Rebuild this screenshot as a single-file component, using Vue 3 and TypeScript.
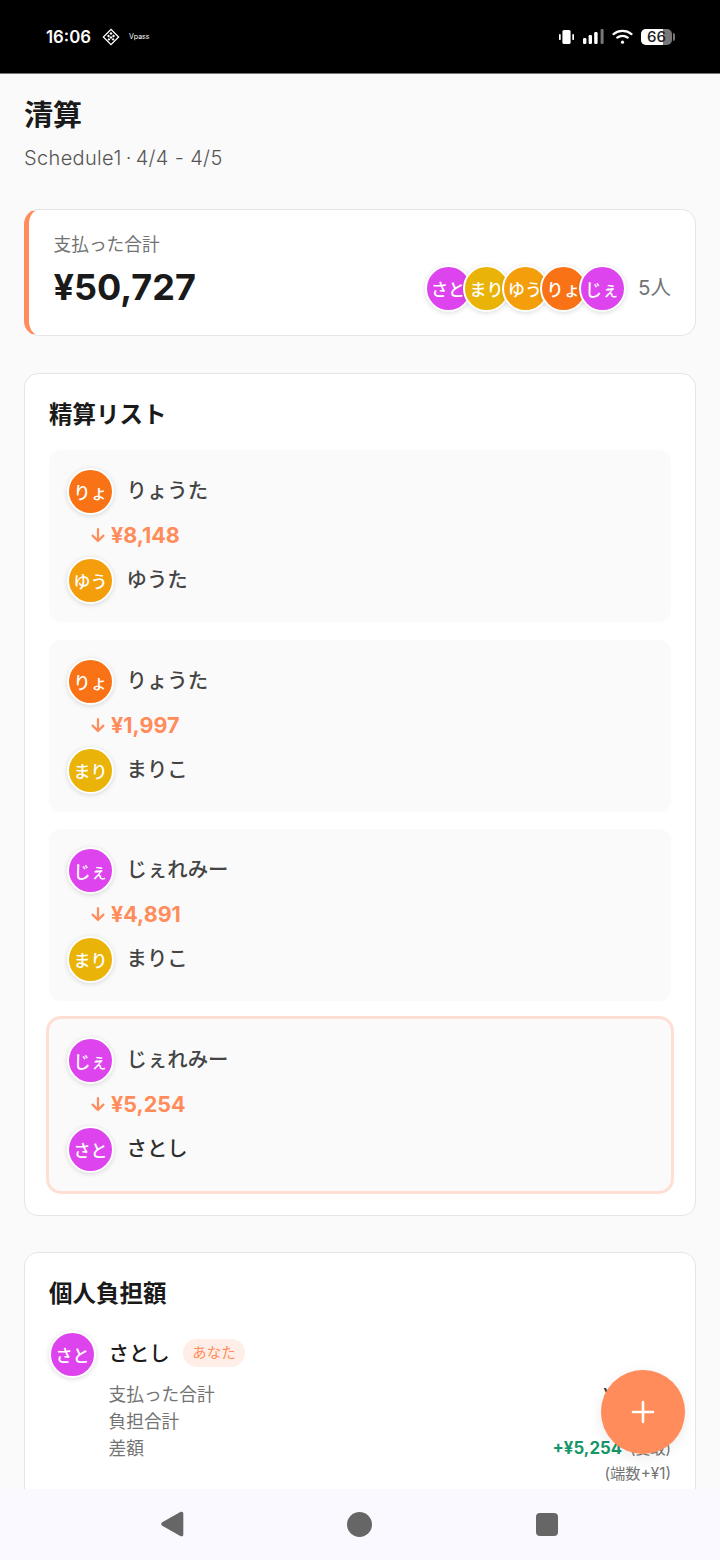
<script setup lang="ts">
interface Person {
  short: string
  name: string
  color: string
}

const sato: Person = { short: 'さと', name: 'さとし', color: '#dd44ee' }
const mari: Person = { short: 'まり', name: 'まりこ', color: '#eab308' }
const yuta: Person = { short: 'ゆう', name: 'ゆうた', color: '#f59e0b' }
const ryo: Person = { short: 'りょ', name: 'りょうた', color: '#f97316' }
const jere: Person = { short: 'じぇ', name: 'じぇれみー', color: '#dd44ee' }

const members = [sato, mari, yuta, ryo, jere]

const settlements = [
  { from: ryo, to: yuta, amount: '¥8,148', mine: false },
  { from: ryo, to: mari, amount: '¥1,997', mine: false },
  { from: jere, to: mari, amount: '¥4,891', mine: false },
  { from: jere, to: sato, amount: '¥5,254', mine: true },
]
</script>

<template>
  <div class="screen">
    <header class="statusbar">
      <div class="status-left">
        <span class="time">16:06</span>
        <svg class="vpass-icon" width="18" height="18" viewBox="0 0 18 18" fill="none">
          <rect x="3.6" y="3.6" width="10.8" height="10.8" transform="rotate(45 9 9)" stroke="#fff" stroke-width="1.3" />
          <g fill="#fff">
            <rect x="7.9" y="4.4" width="2.2" height="2.2" transform="rotate(45 9 5.5)" />
            <rect x="5.4" y="6.9" width="2.2" height="2.2" transform="rotate(45 6.5 8)" />
            <rect x="10.4" y="6.9" width="2.2" height="2.2" transform="rotate(45 11.5 8)" />
            <rect x="7.9" y="8.4" width="2.2" height="2.2" transform="rotate(45 9 9.5)" />
            <rect x="5.9" y="10.4" width="2" height="2" transform="rotate(45 6.9 11.4)" />
            <rect x="10.1" y="10.4" width="2" height="2" transform="rotate(45 11.1 11.4)" />
          </g>
        </svg>
        <span class="vpass">Vpass</span>
      </div>
      <div class="status-right">
        <svg width="15" height="14" viewBox="0 0 15 14" fill="#fff">
          <rect x="3.4" y="0" width="8.2" height="14" rx="1.6" />
          <rect x="0" y="4" width="1.7" height="6" rx="0.85" />
          <rect x="13.3" y="4" width="1.7" height="6" rx="0.85" />
        </svg>
        <svg class="signal" width="21" height="15" viewBox="0 0 21 15" fill="#fff">
          <rect x="0" y="9" width="3.4" height="6" rx="1.2" />
          <rect x="5.6" y="6" width="3.4" height="9" rx="1.2" />
          <rect x="11.2" y="3" width="3.4" height="12" rx="1.2" />
          <rect x="17.6" y="0" width="3" height="15" rx="1" fill="#777" />
        </svg>
        <svg class="wifi" width="21" height="15" viewBox="0 0 22 16" fill="none" stroke="#fff" stroke-width="2.4" stroke-linecap="round">
          <path d="M1.4 5.4C7 .8 15 .8 20.6 5.4" />
          <path d="M5.4 9.2C8.6 6.6 13.4 6.6 16.6 9.2" />
          <circle cx="11" cy="14" r="1.7" fill="#fff" stroke="none" />
        </svg>
        <div class="battery">
          <div class="battery-body">
            <span class="battery-fill"></span>
            <span class="battery-text">66</span>
          </div>
          <span class="battery-cap"></span>
        </div>
      </div>
    </header>

    <main class="content">
      <h1 class="title">清算</h1>
      <p class="subtitle">Schedule1<span class="dot">·</span>4/4 - 4/5</p>

      <section class="total-card">
        <div>
          <div class="total-label">支払った合計</div>
          <div class="total-value">¥50,727</div>
        </div>
        <div class="members">
          <div class="stack">
            <span v-for="m in members" :key="m.name" class="avatar" :style="{ background: m.color }">{{ m.short }}</span>
          </div>
          <span class="count">5人</span>
        </div>
      </section>

      <section class="card list-card">
        <h2 class="card-title">精算リスト</h2>
        <div class="items">
          <div v-for="s in settlements" :key="s.amount" class="item" :class="{ mine: s.mine }">
            <div class="who">
              <span class="avatar" :style="{ background: s.from.color }">{{ s.from.short }}</span>
              <span class="who-name">{{ s.from.name }}</span>
            </div>
            <div class="amount">
              <svg width="16" height="16" viewBox="0 0 16 16" fill="none" stroke="#ff8c5a" stroke-width="2.2" stroke-linecap="round" stroke-linejoin="round">
                <path d="M8 2v12M2.6 8.6 8 14l5.4-5.4" />
              </svg>
              <span>{{ s.amount }}</span>
            </div>
            <div class="who">
              <span class="avatar" :style="{ background: s.to.color }">{{ s.to.short }}</span>
              <span class="who-name" :class="{ strong: s.mine }">{{ s.to.name }}</span>
            </div>
          </div>
        </div>
      </section>

      <section class="card person-card">
        <h2 class="card-title">個人負担額</h2>
        <div class="person">
          <span class="avatar" :style="{ background: sato.color }">さと</span>
          <div class="person-body">
            <div class="person-head">
              <span class="person-name">さとし</span>
              <span class="you">あなた</span>
            </div>
            <div class="line"><span>支払った合計</span><span class="val">¥15,400</span></div>
            <div class="line"><span>負担合計</span><span class="val">¥10,146</span></div>
            <div class="line"><span>差額</span><span class="diff"><b class="plus">+¥5,254</b><small>(受取)</small></span></div>
            <div class="note">(端数+¥1)</div>
          </div>
        </div>
      </section>
    </main>

    <button class="fab" aria-label="追加">
      <svg width="24" height="24" viewBox="0 0 24 24" stroke="#fff" stroke-width="2.6" stroke-linecap="round">
        <path d="M12 2v20M2 12h20" />
      </svg>
    </button>

    <nav class="navbar">
      <svg width="23" height="26" viewBox="1 1 21 24" fill="#666">
        <path d="M21.5 3.4v19.2c0 1.4-1.2 2.2-2.4 1.6L2 14.6c-1.2-.7-1.2-2.5 0-3.2L19.1 1.8c1.2-.6 2.4.2 2.4 1.6Z" />
      </svg>
      <span class="nav-circle"></span>
      <span class="nav-square"></span>
    </nav>
  </div>
</template>

<style scoped>
.screen {
  position: relative;
  display: flex;
  flex-direction: column;
  width: 720px;
  height: 1560px;
  overflow: hidden;
  background: #fafafa;
  color: #1a1a1a;
  font-family: Inter, "Noto Sans CJK JP", sans-serif;
}
.statusbar {
  flex-shrink: 0;
  display: flex;
  align-items: center;
  justify-content: space-between;
  height: 74px;
  padding: 0 45px 0 46px;
  box-sizing: border-box;
  background: #000;
  color: #fff;
  border-bottom: 1px solid #777;
}
.status-left,
.status-right {
  display: flex;
  align-items: center;
}
.time {
  font-size: 16.8px;
  font-weight: 600;
}
.vpass-icon {
  margin-left: 11px;
}
.vpass {
  margin-left: 9px;
  font-size: 7px;
}
.signal,
.wifi {
  margin-left: 8px;
}
.signal {
  margin-left: 9px;
}
.battery {
  display: flex;
  align-items: center;
  margin-left: 8px;
}
.battery-body {
  position: relative;
  width: 31px;
  height: 16px;
  border-radius: 5px;
  background: #777;
  display: flex;
  align-items: center;
  justify-content: center;
}
.battery-fill {
  position: absolute;
  left: 0;
  top: 0;
  bottom: 0;
  width: 22px;
  border-radius: 5px 0 0 5px;
  background: #fff;
}
.battery-text {
  position: relative;
  color: #222;
  font-size: 15px;
  line-height: 16px;
  font-weight: 500;
}
.battery-cap {
  width: 2px;
  height: 8px;
  margin-left: 1px;
  border-radius: 0 2px 2px 0;
  background: #777;
}
.content {
  flex: 1;
  min-height: 0;
  overflow: hidden;
  padding: 23px 24px 0;
}
.title {
  margin: 0;
  font-size: 29px;
  line-height: 38px;
  font-weight: 700;
}
.subtitle {
  margin: 9px 0 0;
  font-size: 20px;
  line-height: 28px;
  font-weight: 300;
  letter-spacing: 0.35px;
  color: #555;
}
.dot {
  margin: 0 4px;
}
.total-card {
  display: flex;
  align-items: flex-end;
  justify-content: space-between;
  height: 127px;
  margin-top: 37px;
  padding: 22.5px 24px 26.5px 24.5px;
  box-sizing: border-box;
  background: #fff;
  border: 1.5px solid #e5e5e5;
  border-left: 5px solid #ff8c5a;
  border-radius: 15px;
}
.total-label {
  font-size: 17.7px;
  line-height: 24px;
  color: #737373;
}
.total-value {
  margin-top: 8px;
  font-size: 36px;
  line-height: 44px;
  font-weight: 700;
}
.members {
  display: flex;
  align-items: center;
  margin-bottom: -3.5px;
}
.stack {
  display: flex;
}
.stack .avatar + .avatar {
  margin-left: -8.5px;
}
.count {
  margin-left: 12.5px;
  padding-bottom: 6px;
  font-size: 20.5px;
  color: #737373;
}
.avatar {
  flex-shrink: 0;
  display: flex;
  align-items: center;
  justify-content: center;
  width: 47px;
  height: 47px;
  box-sizing: border-box;
  border: 2px solid #fff;
  border-radius: 50%;
  color: #fff;
  font-size: 17px;
  font-weight: 500;
  white-space: nowrap;
  box-shadow: 0 1px 5px rgba(0, 0, 0, 0.14);
}
.card {
  margin-top: 36.5px;
  padding: 24px;
  background: #fff;
  border: 1.5px solid #e5e5e5;
  border-radius: 14px;
}
.card-title {
  margin: 0;
  font-size: 23.5px;
  line-height: 34px;
  font-weight: 700;
}
.items {
  display: flex;
  flex-direction: column;
  gap: 17.5px;
  margin-top: 18.5px;
}
.item {
  padding: 18px;
  background: #fafafa;
  border-radius: 12px;
}
.item.mine {
  box-shadow: 0 0 0 3px #ffdfd2;
}
.who {
  display: flex;
  align-items: center;
  gap: 12.5px;
}
.who-name {
  padding-bottom: 5px;
  font-size: 20.4px;
  font-weight: 500;
  color: #444;
}
.who-name.strong {
  color: #2e2e2e;
}
.amount {
  display: flex;
  align-items: center;
  gap: 5.5px;
  height: 42px;
  padding-left: 22.5px;
  padding-bottom: 2px;
  box-sizing: border-box;
  font-size: 21.5px;
  font-weight: 700;
  color: #ff8c5a;
}
.person-card {
  height: 300px;
  box-sizing: border-box;
}
.person {
  display: flex;
  gap: 12.5px;
  margin-top: 20px;
}
.person-body {
  flex: 1;
  min-width: 0;
}
.person-head {
  display: flex;
  align-items: center;
  gap: 13px;
  height: 44px;
  margin-bottom: 6px;
}
.person-name {
  padding-bottom: 2px;
  font-size: 20.4px;
  font-weight: 500;
}
.you {
  padding: 0 9.5px;
  height: 27.5px;
  line-height: 27.5px;
  border-radius: 14px;
  background: #ffeee7;
  color: #ff8c5a;
  font-size: 14.5px;
}
.line {
  display: flex;
  justify-content: space-between;
  font-size: 17.7px;
  line-height: 27px;
  color: #737373;
}
.val {
  font-weight: 500;
  color: #333;
}
.diff {
  display: flex;
  align-items: center;
  gap: 8px;
}
.diff small {
  font-size: 15px;
}
.plus {
  color: #179768;
  font-size: 16.8px;
  font-weight: 700;
}
.note {
  text-align: right;
  font-size: 15.3px;
  line-height: 24px;
  color: #737373;
}
.fab {
  position: absolute;
  left: 601px;
  top: 1370px;
  display: flex;
  align-items: center;
  justify-content: center;
  width: 83.5px;
  height: 83.5px;
  padding: 0;
  border: none;
  border-radius: 50%;
  background: #ff8c5a;
  box-shadow: 0 4px 14px rgba(0, 0, 0, 0.08);
}
.navbar {
  position: absolute;
  left: 0;
  right: 0;
  bottom: 0;
  display: flex;
  align-items: center;
  justify-content: space-between;
  height: 71.5px;
  padding: 0 161.7px 0 161px;
  box-sizing: border-box;
  background: #f9f9ff;
}
.nav-circle {
  width: 25px;
  height: 25px;
  border-radius: 50%;
  background: #666;
}
.nav-square {
  width: 22.6px;
  height: 22.6px;
  border-radius: 4px;
  background: #666;
}
</style>

<style>
html,
body {
  margin: 0;
  background: #fafafa;
}
</style>
